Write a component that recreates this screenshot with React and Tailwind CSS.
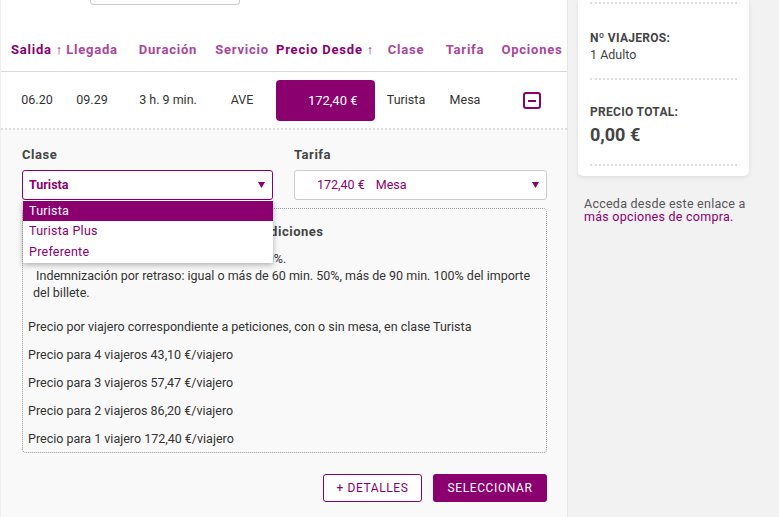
import React from "react";

const PURPLE = "#8a006e";

const cols = [
  { w: "w-[56px]", head: "Salida ↑", strong: true, value: "06.20" },
  { w: "w-[54px]", head: "Llegada", value: "09.29" },
  { w: "w-[98px]", head: "Duración", value: "3 h. 9 min." },
  { w: "w-[50px]", head: "Servicio", value: "AVE" },
  { w: "w-[116px]", head: "Precio Desde ↑", strong: true, price: true },
  { w: "w-[46px]", head: "Clase", value: "Turista" },
  { w: "w-[72px]", head: "Tarifa", value: "Mesa" },
  { w: "w-[62px]", head: "Opciones", toggle: true },
];

const precios = [
  "Precio para 4 viajeros 43,10 €/viajero",
  "Precio para 3 viajeros 57,47 €/viajero",
  "Precio para 2 viajeros 86,20 €/viajero",
  "Precio para 1 viajero 172,40 €/viajero",
];

const Caret = () => (
  <svg width="7" height="6" viewBox="0 0 7 6" className="shrink-0">
    <path d="M0 0 H7 L3.5 6 Z" fill={PURPLE} />
  </svg>
);

const MinusBox = () => (
  <div className="w-[18px] h-[17px] border-2 border-[#8a006e] rounded-[3px] flex items-center justify-center">
    <div className="w-[8px] h-[2px] bg-[#8a006e]" />
  </div>
);

const ResultRow = () => (
  <div className="border-l border-[#eee]">
    <div className="h-[72px] border-b border-[#d9d9d9]">
      <div className="ml-[89px] w-[150px] h-[5px] border border-t-0 border-[#ccc] rounded-b-[4px]" />
      <div className="flex pl-[8px] mt-[37px] h-[16px] items-center">
        {cols.map((c) => (
          <div
            key={c.head}
            className={`${c.w} shrink-0 flex justify-center whitespace-nowrap text-[13px] font-bold tracking-[0.06em] ${
              c.strong ? "text-[#8a006e]" : "text-[#a8479a]"
            }`}
          >
            {c.head}
          </div>
        ))}
      </div>
    </div>
    <div className="h-[56px] flex pl-[8px] items-center pt-[1px]">
      {cols.map((c) => (
        <div
          key={c.head}
          className={`${c.w} shrink-0 flex justify-center whitespace-nowrap text-[12.5px] text-[#333]`}
        >
          {c.price ? (
            <div className="w-[99px] h-[41px] rounded-[4px] bg-[#8a006e] text-white text-[13px] flex items-center justify-end pr-[17px]">
              172,40 €
            </div>
          ) : c.toggle ? (
            <MinusBox />
          ) : (
            c.value
          )}
        </div>
      ))}
    </div>
    <div className="border-t-2 border-dotted border-[#dcdcdc]" />
  </div>
);

const Detalle = () => (
  <div className="flex-1 bg-[#f9f9f9] border-l border-[#eee] pl-[21px] pr-[20px] pt-[17px]">
    <div className="flex gap-[21px]">
      <div className="w-[251px]">
        <div className="text-[13px] font-bold tracking-[0.04em] text-[#444] leading-[16px] mb-[7px]">Clase</div>
        <div className="relative">
          <div className="h-[30px] bg-white border-[1.5px] border-[#8a006e] rounded-[3px] flex items-center justify-between pl-[6px] pr-[7px]">
            <span className="text-[12.5px] font-bold text-[#8a006e]">Turista</span>
            <Caret />
          </div>
          <ul className="absolute top-full left-[1px] right-0 z-10 bg-white shadow-[0_2px_6px_rgba(0,0,0,0.3)] text-[12.5px] tracking-[0.02em] pt-[1px]">
            <li className="h-[20px] flex items-center pl-[6px] bg-[#8a006e] text-white">Turista</li>
            <li className="h-[21px] flex items-center pl-[6px] text-[#8a006e]">Turista Plus</li>
            <li className="h-[21px] flex items-center pl-[6px] text-[#8a006e]">Preferente</li>
          </ul>
        </div>
      </div>
      <div className="w-[253px]">
        <div className="text-[13px] font-bold tracking-[0.04em] text-[#444] leading-[16px] mb-[7px]">Tarifa</div>
        <div className="h-[30px] bg-white border border-[#ccc] rounded-[3px] flex items-center justify-between pl-[22px] pr-[7px]">
          <span className="text-[12.5px] text-[#8a006e]">
            172,40 €<span className="ml-[11px]">Mesa</span>
          </span>
          <Caret />
        </div>
      </div>
    </div>

    <div className="mt-[8px] w-[525px] border border-dotted border-[#999] rounded-[4px] pt-[15px] pb-[5px] text-[12.5px] text-[#333]">
      <div className="text-center text-[13px] font-bold tracking-[0.04em] text-[#444] leading-[16px]">Condiciones</div>
      <div className="pl-[10px] pr-[10px] mt-[10px] leading-[17px]">
        <p>&nbsp;Mesa: No admite cambios. Anulaciones 50%.</p>
        <p>&nbsp;Indemnización por retraso: igual o más de 60 min. 50%, más de 90 min. 100% del importe del billete.</p>
      </div>
      <div className="pl-[5px] mt-[17px] leading-[17px] flex flex-col gap-[11px]">
        <p>Precio por viajero correspondiente a peticiones, con o sin mesa, en clase Turista</p>
        {precios.map((p) => (
          <p key={p}>{p}</p>
        ))}
      </div>
    </div>

    <div className="w-[525px] flex justify-end gap-[11px] mt-[21px]">
      <button className="w-[99px] h-[28px] bg-white border border-[#8a006e] rounded-[3px] text-[12px] tracking-wider text-[#8a006e]">
        + DETALLES
      </button>
      <button className="w-[114px] h-[28px] bg-[#8a006e] rounded-[3px] text-[12px] tracking-wider text-white">
        SELECCIONAR
      </button>
    </div>
  </div>
);

const Resumen = () => (
  <aside className="flex-1 pl-[10px]">
    <div className="w-[171px] bg-white rounded-b-[5px] shadow-[0_2px_4px_rgba(0,0,0,0.08)] px-[12px] pt-[2px] pb-[10px] text-[#444]">
      <div className="border-t-2 border-dotted border-[#ddd]" />
      <div className="pt-[27px] pb-[15px]">
        <div className="text-[12px] font-bold tracking-wide leading-[14px]">Nº VIAJEROS:</div>
        <div className="text-[12.5px] leading-[16px] mt-[2px]">1 Adulto</div>
      </div>
      <div className="border-t-2 border-dotted border-[#ddd]" />
      <div className="pt-[25px] pb-[18px]">
        <div className="text-[12px] font-bold tracking-wide leading-[14px]">PRECIO TOTAL:</div>
        <div className="text-[18px] font-bold leading-[22px] mt-[5px]">0,00 €</div>
      </div>
      <div className="border-t-2 border-dotted border-[#ddd]" />
    </div>
    <p className="mt-[21px] ml-[6px] w-[162px] text-[12.5px] tracking-[0.02em] leading-[13px] text-[#555]">
      Acceda desde este enlace a <span className="text-[#8a006e]">más opciones de compra.</span>
    </p>
  </aside>
);

export default function App() {
  return (
    <div className="w-[779px] h-[517px] overflow-hidden flex bg-[#f2f2f2] font-['Roboto',sans-serif]">
      <main className="w-[568px] shrink-0 bg-white flex flex-col border-r border-[#e6e6e6]">
        <ResultRow />
        <Detalle />
      </main>
      <Resumen />
    </div>
  );
}
